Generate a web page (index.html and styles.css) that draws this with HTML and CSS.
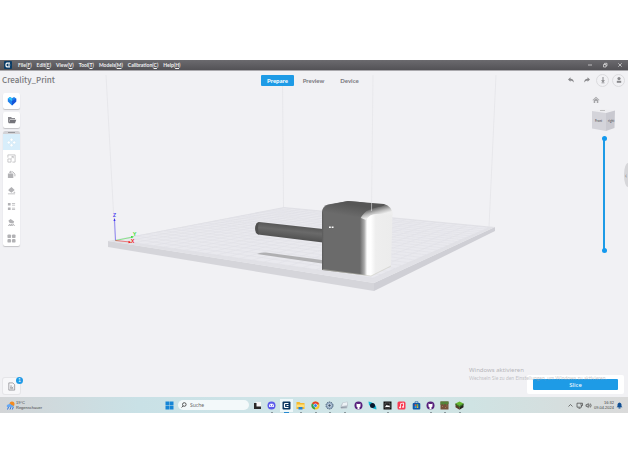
FILE: index.html
```html
<!DOCTYPE html>
<html lang="en">
<head>
<meta charset="utf-8">
<title>Creality_Print</title>
<link rel="stylesheet" href="styles.css">
</head>
<body>
<header class="menubar">
  <svg class="logo" viewBox="0 0 8 8" aria-hidden="true"><rect width="8" height="8" rx="1" fill="#0a3c66"/><path d="M6 2.2H2.8L2 3v2l.8.8H6M4 4h2.2" fill="none" stroke="#fff" stroke-width="1.2"/></svg>
  <nav class="menus">
    <button>File(<u>F</u>)</button>
    <button>Edit(<u>E</u>)</button>
    <button>View(<u>V</u>)</button>
    <button>Tool(<u>T</u>)</button>
    <button>Models(<u>M</u>)</button>
    <button>Calibration(<u>C</u>)</button>
    <button>Help(<u>H</u>)</button>
  </nav>
  <div class="window-buttons">
    <button aria-label="Minimize"><svg viewBox="0 0 6 6"><path d="M1 3h4"/></svg></button>
    <button aria-label="Restore"><svg viewBox="0 0 6 6"><path d="M1.500 2.500h2.500v2.500h-2.500zM2.500 2.500v-1.200h2.500v2.500h-1"/></svg></button>
    <button aria-label="Close"><svg viewBox="0 0 6 6"><path d="M1.300 1.300l3.400 3.400M4.700 1.300l-3.400 3.400"/></svg></button>
  </div>
</header>

<main class="workspace">
  <svg class="scene" viewBox="0 71 628 326" aria-hidden="true">
    <defs>
      <linearGradient id="body" gradientUnits="userSpaceOnUse" x1="321" y1="0" x2="393" y2="0">
        <stop offset="0" stop-color="#505050"/><stop offset=".04" stop-color="#6b6b6b"/><stop offset=".54" stop-color="#6b6b6b"/>
        <stop offset=".6" stop-color="#a9a9a9"/><stop offset=".64" stop-color="#fff"/><stop offset=".69" stop-color="#fff"/>
        <stop offset=".76" stop-color="#eee"/><stop offset="1" stop-color="#ececec"/>
      </linearGradient>
      <linearGradient id="lid" gradientUnits="userSpaceOnUse" x1="350" y1="204" x2="348" y2="216">
        <stop offset="0" stop-color="#565656"/><stop offset="1" stop-color="#6b6b6b"/>
      </linearGradient>
      <linearGradient id="shoulder" gradientUnits="userSpaceOnUse" x1="376" y1="204" x2="379" y2="215">
        <stop offset="0" stop-color="#585858"/><stop offset=".3" stop-color="#686868"/><stop offset=".7" stop-color="#bdbdbd"/><stop offset="1" stop-color="#eee"/>
      </linearGradient>
      <linearGradient id="rod" gradientUnits="userSpaceOnUse" x1="290" y1="225" x2="288.500" y2="239">
        <stop offset="0" stop-color="#565656"/><stop offset=".4" stop-color="#6a6a6a"/><stop offset="1" stop-color="#505050"/>
      </linearGradient>
    </defs>
    <path d="M108 241L374 283V291L108 247Z" fill="#d5d5da"/>
    <path d="M374 283L495 227V231L374 291Z" fill="#cfcfd5"/>
    <path d="M108 241L284 207L495 227L374 283Z" fill="#e1e1e6"/>
    <path d="M116 240L284 208L489 227.500L373 278Z" fill="#e9e9ee"/>
    <path id="bed-grid" fill="none" stroke="#dedee4" stroke-width=".5"/>
    <g stroke="#e5e5e8" stroke-width=".8"><path d="M106 75L115 240M282.500 75L283.500 207M496 75L489 227"/></g>
    <path d="M257 254Q260 252 266 252.500L322 260V263.500Z" fill="#b0b0b2"/>
    <path d="M259 222L323 229V242.500L258 234.500Q255 233 255 228Q256 222 259 222Z" fill="url(#rod)"/>
    <path d="M259 222.500Q255 223 255.500 229Q256 234 259 234.500Q257 228 259 222.500Z" fill="#505050"/>
    <path d="M322 270V213Q322 206 328 204.500L348 201L384 204Q392 206 392.500 213L391 266L371 276Z" fill="url(#body)"/>
    <path d="M361 218Q362 210 368 204L384 204Q392 206 392.500 215L378 214Q370 213 366 220Z" fill="url(#shoulder)"/>
    <path d="M323 214Q323.500 207 328 205L348 201L384 204Q386 206 378 207Q366 209 361 217Z" fill="url(#lid)"/>
    <path d="M322.500 269.500L371 276L391 266" fill="none" stroke="#c4c4b8" stroke-width=".5"/>
    <path d="M373 75L371.500 211" stroke="#e2e2e5" stroke-width=".6"/>
    <path d="M329 226.500h1.800v1.500H329zM331.700 226.500h1.800v1.500h-1.800z" fill="#fff"/>
    <g stroke-width=".6" fill="none"><path d="M115.500 240.500L114.500 219" stroke="#4a3cf0"/><path d="M115.500 240.500L133 237" stroke="#4be04b"/><path d="M115.500 240.500L130 242" stroke="#f03030"/></g>
    <path d="M113.500 221h2l-1-3z" fill="#3c2cf0"/><path d="M131 236l3 .8-2.800 1.300z" fill="#28dc28"/><path d="M128.500 241l3 1.200-3 1z" fill="#f01818"/>
    <g class="axis"><text x="113" y="217" fill="#4a3cf0">Z</text><text x="133" y="236" fill="#28dc28">Y</text><text x="131" y="243" fill="#f01818">X</text></g>
  </svg>

  <div class="topbar">
    <h1>Creality_Print</h1>
    <nav class="tabs">
      <button class="active">Prepare</button>
      <button>Preview</button>
      <button>Device</button>
    </nav>
    <div class="actions">
      <button aria-label="Undo"><svg viewBox="0 0 8 8"><path d="M1 3.500L3.500 1.300V2.700Q6.800 2.800 6.800 6.500Q5.500 4.500 3.500 4.500V5.800Z"/></svg></button>
      <button aria-label="Redo"><svg viewBox="0 0 8 8"><path d="M7 3.500L4.500 1.300V2.700Q1.200 2.800 1.200 6.500Q2.500 4.500 4.500 4.500V5.800Z"/></svg></button>
      <button class="round" aria-label="Download"><svg viewBox="0 0 8 8"><path d="M3.500 1h1v3.300H6L4 6.500 2 4.300h1.500zM2.500 6.600h3v.7h-3z"/></svg></button>
      <button class="round" aria-label="Account"><svg viewBox="0 0 8 8"><circle cx="4" cy="2.600" r="1.600"/><path d="M1.800 4.800h4.400v2H1.800z"/></svg></button>
    </div>
  </div>

  <div class="middle">
    <aside class="tools">
      <button class="card" aria-label="Model library"><svg viewBox="0 0 10 10"><path d="M5 9.500L.8 5.500V2.500L3 1l2 1.200L7 1l2.200 1.500v3Z" fill="#1f83ee"/><path d="M.8 2.500L3 1l2 1.200V5Z" fill="#35c3f5"/><path d="M5 5l4.200-2.500v3L5 9.500Z" fill="#1554d8"/></svg></button>
      <button class="card" aria-label="Open file"><svg viewBox="0 0 10 10"><path d="M1 8V2h3l1 1h3v1.200H3L1.500 8Z" fill="#8a8a8f"/><path d="M3 4.700h6.300L8 8.300H1.700Z" fill="#74747a"/></svg></button>
      <div class="palette">
        <span class="grip"></span>
        <button class="selected" aria-label="Move"><svg viewBox="0 0 10 10" fill="#fff"><path d="M5 0l1.800 2L5 3.800 3.200 2zM5 6.200L6.800 8 5 10 3.200 8zM0 5l2-1.800L3.800 5 2 6.800zM10 5L8 3.200 6.200 5 8 6.800z" stroke="#c4dcea" stroke-width=".2"/></svg></button>
        <button aria-label="Scale"><svg viewBox="0 0 10 10" fill="none" stroke="#b5b5b8" stroke-width=".8"><path d="M1 4V1h8v8H6M1 5.500h3.500V9H1zM4.500 5L7 2.700M5 2.700h2v2"/></svg></button>
        <button aria-label="Rotate"><svg viewBox="0 0 10 10"><path d="M1 4h6v5H1z" fill="#b2b2b5"/><path d="M3 2.500Q7 .5 8.800 4.500V7M4.500 1L2.800 2.500l2 1" fill="none" stroke="#b2b2b5"/></svg></button>
        <button aria-label="Lay flat"><svg viewBox="0 0 10 10" fill="#b2b2b5"><path d="M2 3.500L5 1l3.500 3.500L5 7.500 1.500 5zM1 8.300h8v.8H1zM8 6l1.500 1.500H7z"/></svg></button>
        <button aria-label="Object list"><svg viewBox="0 0 10 10" fill="#b2b2b5"><path d="M1 1h3v3H1zM1 6h3v3H1zM5.500 1.300H9v.8H5.500zM5.500 3H9v.8H5.500zM5.500 6.300H9v.8H5.500zM5.500 8H9v.8H5.500z"/></svg></button>
        <button aria-label="Support"><svg viewBox="0 0 10 10" fill="#b2b2b5"><path d="M1.500 3L4 1l4 3-1 2-4-.5zM1 8.500L3 6.500l1 1 1-1 1 1 1-1 2 2.500H8L7 7.900 6 9H5V8L4 9H3V7.800L2 9z"/></svg></button>
        <button aria-label="Arrange"><svg viewBox="0 0 10 10" fill="#b2b2b5"><rect x=".5" y=".5" width="4" height="4" rx="1.300"/><rect x="5.500" y=".5" width="4" height="4" rx="1.300"/><rect x=".5" y="5.500" width="4" height="4" rx="1.300"/><rect x="5.500" y="5.500" width="4" height="4" rx="1.300"/></svg></button>
      </div>
    </aside>
    <aside class="view">
      <button class="home" aria-label="Home view"><svg viewBox="0 0 8 8"><path d="M.5 4L4 .8 7.500 4l-.5.400L4 1.800 1 4.400zM1.700 4.300L4 2.300l2.300 2V7H4.800V5H3.200v2H1.700z" fill="#a5a5a8"/></svg></button>
      <svg class="cube" viewBox="0 0 24 22" role="img" aria-label="View cube">
        <path d="M0 2L11 0 23 1.500 14 4Z" fill="#eeeef1"/><path d="M0 2l14 2v18L0 19.500Z" fill="#d4d4da"/><path d="M14 4l9-2.500L22.500 19 14 22Z" fill="#c9c9d0"/>
        <path d="M8 1.500h5" stroke="#aaa" stroke-width=".7"/>
        <text x="3" y="13">Front</text><text x="16" y="13">right</text>
      </svg>
      <div class="layers">
        <input type="range" min="0" max="100" value="100" aria-label="Top layer">
        <input type="range" min="0" max="100" value="0" aria-label="Bottom layer">
      </div>
    </aside>
    <button class="drawer" aria-label="Open panel">‹</button>
  </div>

  <div class="bottom">
    <button class="card report" aria-label="Messages"><svg viewBox="0 0 10 10" fill="none" stroke="#77777c" stroke-width=".7"><path d="M2 1h4.500L8.500 3v6H2zM3.500 4.500h2M3.500 6.500l1-1 1 1 1.500-1M3.500 7.500h3.500"/></svg><span class="badge">1</span></button>
    <div class="slice-panel">
      <p class="watermark"><strong>Windows aktivieren</strong>Wechseln Sie zu den Einstellungen, um Windows zu aktivieren.</p>
      <button class="slice">Slice</button>
    </div>
  </div>
</main>

<footer class="taskbar">
  <button class="weather">
    <svg viewBox="0 0 9 9"><circle cx="6" cy="3" r="2.500" fill="#f58a1f"/><path d="M1 6Q0 4 2.300 3.500Q4 1.800 5.500 4Q8 4 7.500 6Z" fill="#67a7f2"/><path d="M2.500 6l-1 2.500M5 6L4 8.500M7.300 6l-1 2.500" stroke="#2c72dc"/></svg>
    <span>19°C<br>Regenschauer</span>
  </button>
  <div class="dock">
    <button aria-label="Start"><svg viewBox="0 0 9 9" fill="#1685d6"><path d="M.5.500h3.800v3.800H.5zM4.700.500h3.800v3.800H4.700zM.5 4.700h3.800v3.800H.5zM4.700 4.700h3.800v3.800H4.700z"/></svg></button>
    <label class="search"><svg viewBox="0 0 6 6" fill="none" stroke="#333" stroke-width=".8"><circle cx="3.300" cy="2.500" r="1.800"/><path d="M2 4L.6 5.500"/></svg><input type="text" placeholder="Suche" aria-label="Suche"></label>
    <div class="apps">
      <button aria-label="Task view"><svg viewBox="0 0 9 9"><path d="M3 1h5v5H3z" fill="#f7f7f7"/><path d="M1 2h2.500v3.500H8V8H1z" fill="#292929"/></svg></button>
      <button class="open" aria-label="Discord"><svg viewBox="0 0 9 9"><circle cx="4.500" cy="4.500" r="4" fill="#5b5bea"/><path d="M2 6Q1.800 3 3.300 2.700h2.400Q7.200 3 7 6L5.500 5.700h-2z" fill="#fff"/><path d="M3 4.300h1M5 4.300h1" stroke="#5b5bea"/></svg></button>
      <button class="open current" aria-label="Creality Print"><svg viewBox="0 0 9 9"><rect x=".5" y=".5" width="8" height="8" rx="1" fill="#09345d"/><path d="M6.500 2.500H3L2.500 3v3l.5.500h3.500M4.500 4.500h2" fill="none" stroke="#fff" stroke-width="1.200"/></svg></button>
      <button class="open" aria-label="Explorer"><svg viewBox="0 0 9 9"><path d="M.5 1h3l1 1h4v6h-8z" fill="#f5b92f"/><path d="M.5 3.500h8V6h-8z" fill="#ffe07a"/><path d="M2.500 6h4v2.500h-4z" fill="#2583d5"/></svg></button>
      <button class="open" aria-label="Chrome"><svg viewBox="0 0 9 9"><circle cx="4.500" cy="4.500" r="4" fill="#f7c52b"/><path d="M4.500 4.500L1 2.500A4 4 0 0 1 8.200 3Z" fill="#e43e30"/><path d="M4.500 4.500L1 2.500A4 4 0 0 0 4 8.500Z" fill="#2fa353"/><circle cx="4.500" cy="4.500" r="2" fill="#fff"/><circle cx="4.500" cy="4.500" r="1.500" fill="#367fea"/></svg></button>
      <button class="open" aria-label="Settings"><svg viewBox="0 0 9 9"><circle cx="4.500" cy="4.500" r="3.500" fill="#8fa8c2" stroke="#4f6478" stroke-dasharray="1.400 .8"/><circle cx="4.500" cy="4.500" r="2" fill="#dce7f0"/><circle cx="4.500" cy="4.500" r="1.200" fill="#3c536c"/></svg></button>
      <button class="open" aria-label="Scanner"><svg viewBox="0 0 9 9"><path d="M2.500 1.500l5-1 .5 4-1 3-6 .5-.5-3z" fill="#c0c8d0"/><path d="M3 2l4-.7v3L2 5z" fill="#edf2f6"/><path d="M.8 6.500l6-.5" stroke="#8d98a4"/></svg></button>
      <button aria-label="GitHub"><svg viewBox="0 0 9 9"><circle cx="4.500" cy="4.500" r="4" fill="#57217c"/><path d="M2.500 2.500l1 .5h2l1-.5v3l-1 .8v2h-2v-2l-1-.8z" fill="#fff"/></svg></button>
      <button aria-label="Orbit"><svg viewBox="0 0 9 9"><path d="M.5.500L4 1.500 8 5l.5 3.500L5 7.500 1 4z" fill="#14b3d2"/><circle cx="4.500" cy="4.500" r="2.500" fill="#07172c"/></svg></button>
      <button class="open" aria-label="Capture"><svg viewBox="0 0 9 9"><path d="M.5.500h8v8h-8z" fill="#111"/><path d="M2 2h5v5H2z" fill="none" stroke="#999" stroke-width=".5"/><path d="M2 6l2-2.500L5 5l1-1 1 2z" fill="#fff"/></svg></button>
      <button aria-label="Music"><svg viewBox="0 0 9 9"><rect x=".5" y=".5" width="8" height="8" rx="1.500" fill="#f83d54"/><path d="M3.500 6.300V2.700l3-.7v3.800" fill="none" stroke="#fff" stroke-width=".8"/><circle cx="3" cy="6.400" r=".9" fill="#fff"/><circle cx="6" cy="5.900" r=".9" fill="#fff"/></svg></button>
      <button aria-label="Store"><svg viewBox="0 0 9 9"><path d="M3 2V.8h3V2" fill="none" stroke="#1a5aa5" stroke-width=".7"/><rect x=".7" y="2" width="7.600" height="6.500" rx="1" fill="#0e58a8"/><path d="M2.700 3.300h1.600v1.600H2.700z" fill="#f25a35"/><path d="M4.700 3.300h1.600v1.600H4.700z" fill="#86c835"/><path d="M2.700 5.300h1.600v1.600H2.700z" fill="#36b6f5"/><path d="M4.700 5.300h1.600v1.600H4.700z" fill="#fac332"/></svg></button>
      <button class="open" aria-label="GitHub Desktop"><svg viewBox="0 0 9 9"><circle cx="4.500" cy="4.500" r="4" fill="#57217c"/><path d="M2.500 2.500l1 .5h2l1-.5v3l-1 .8v2h-2v-2l-1-.8z" fill="#fff"/></svg></button>
      <button class="open" aria-label="Minecraft"><svg viewBox="0 0 9 9"><path d="M.5.500h8v8h-8z" fill="#76513a"/><path d="M.5.500h8V3H7v1H6V3H4v1H3V3H1.500v1h-1z" fill="#548237"/><path d="M2 5h1v1H2zM5 6h1v1H5zM6.500 4.500h1v1h-1z" fill="#a27b58"/></svg></button>
      <button class="open" aria-label="Minecraft Launcher"><svg viewBox="0 0 9 9"><path d="M4.500.5l4 2-4 2.500-4-2.500z" fill="#64b82f"/><path d="M.5 2.500l4 2.500v3.700l-4-2.500z" fill="#593c28"/><path d="M8.500 2.500l-4 2.500v3.700l4-2.500z" fill="#25211c"/><path d="M.5 2.500l4 2.500 4-2.500v1.300L4.500 6.300l-4-2.500z" fill="#367a23"/></svg></button>
    </div>
  </div>
  <div class="tray">
    <button aria-label="Hidden icons"><svg viewBox="0 0 7 7"><path d="M1.500 4.500l2-2 2 2"/></svg></button>
    <button aria-label="Network"><svg viewBox="0 0 7 7"><path d="M5 1.200H1v4h4.500V4M2.500 6.300h2M5 1.200h1.500v2.300H5z"/></svg></button>
    <button aria-label="Volume"><svg viewBox="0 0 7 7"><path d="M1 2.700h1L3.300 1.500v4L2 4.300H1zM4.300 2.500q.8 1 0 2M5.300 1.500q1.700 2 0 4"/></svg></button>
    <time datetime="2024-04-09T16:32">16:32<br>09.04.2024</time>
    <button aria-label="Notifications"><svg viewBox="0 0 7 7"><path class="bell" d="M.5 5.300l1-1V2.500Q1.700.8 3.500.5 5.300.8 5.500 2.500v1.800l1 1zM2.500 5.600h2v.9h-2z"/></svg></button>
  </div>
</footer>
<script src="bed.js"></script>
</body>
</html>
```
FILE: styles.css
```css
* { box-sizing: border-box; }

body {
  margin: 0;
  min-height: 100vh;
  padding: 60px 0 59px;
  display: flex;
  flex-direction: column;
  background: #fff;
  font-family: Lato, "Noto Sans", sans-serif;
  font-size: 5px;
  color: #77777c;
  overflow: hidden;
}

button {
  margin: 0;
  padding: 0;
  border: 0;
  background: none;
  font: inherit;
  color: inherit;
  display: flex;
  align-items: center;
  justify-content: center;
}

svg { display: block; flex: none; }

.menubar {
  display: flex;
  align-items: center;
  height: 11px;
  padding: 0 5px 0 4px;
  background: linear-gradient(#6b6a6e, #535256);
  border-bottom: 1px solid #aaa9ad;
  color: #f0f0f0;
}
.logo { width: 8px; height: 8px; }
.menus { display: flex; gap: 5px; margin-left: 6px; flex: 1; font-weight: 700; line-height: 8px; }
.menus button { display: block; }
.window-buttons { display: flex; gap: 9px; }
.window-buttons svg { width: 6px; height: 6px; fill: none; stroke: #e5e5e5; stroke-width: .7; }

.workspace {
  position: relative;
  flex: 1;
  display: flex;
  flex-direction: column;
  background: #f1f1f4;
}
.scene { position: absolute; inset: 0; width: 100%; height: 100%; }
.axis { font-size: 5px; font-weight: 700; }

.topbar {
  position: relative;
  display: grid;
  grid-template-columns: 1fr auto 1fr;
  align-items: center;
  height: 18px;
  padding: 0 3px 0 2px;
}
.topbar h1 { margin: 0; font-family: "Noto Sans CJK SC", sans-serif; font-size: 8px; line-height: 12px; font-weight: 500; color: #77777a; }
.tabs { display: flex; gap: 3px; }
.tabs button { width: 33px; height: 11px; border-radius: 1px; font-size: 6px; font-weight: 700; }
.tabs .active { background: #1e9be6; color: #fff; }
.actions { display: flex; justify-content: flex-end; align-items: center; gap: 3px; }
.actions button { width: 13px; height: 13px; }
.actions svg { width: 8px; height: 8px; fill: #88888b; }
.actions .round { border: 1px solid #dbdbde; border-radius: 50%; }

.middle {
  position: relative;
  flex: 1;
  display: flex;
  justify-content: space-between;
  align-items: flex-start;
  padding: 4px 12px 0 3px;
}
.tools { display: flex; flex-direction: column; gap: 3px; width: 17px; }
.card {
  width: 17px;
  height: 16px;
  background: #fff;
  border-radius: 2px;
  box-shadow: 0 1px 1px #c2c2c6;
}
.card svg { width: 10px; height: 10px; }
.palette { background: #fff; border-radius: 2px; overflow: hidden; box-shadow: 0 1px 1px #c2c2c6; }
.grip { display: flex; align-items: center; justify-content: center; height: 3px; background: #d2d2d6; }
.grip::before { content: ""; width: 7px; height: 1px; background: #98989c; }
.palette button { width: 100%; height: 16px; }
.palette svg { width: 9px; height: 9px; }
.palette .selected { background: #d8eefb; }

.view { display: flex; flex-direction: column; align-items: center; width: 24px; padding-top: 3px; }
.home { align-self: flex-start; width: 8px; height: 8px; }
.home svg { width: 8px; height: 8px; }
.cube { width: 24px; height: 22px; margin-top: 5px; font-size: 3px; font-weight: 700; fill: #69696e; }
.layers { position: relative; width: 6px; height: 117px; margin-top: 5px; }
.layers::before { content: ""; position: absolute; inset: 2px; background: #1e9be6; }
.layers input {
  position: absolute;
  inset: 0;
  margin: 0;
  width: 6px;
  height: 100%;
  appearance: none;
  writing-mode: vertical-lr;
  direction: rtl;
  background: none;
  pointer-events: none;
}
.layers input::-webkit-slider-thumb {
  appearance: none;
  width: 5px;
  height: 5px;
  border-radius: 50%;
  background: #1499ee;
  pointer-events: auto;
}
.drawer {
  position: absolute;
  right: 0;
  top: 74px;
  width: 4px;
  height: 24px;
  border-radius: 100% 0 0 100% / 50% 0 0 50%;
  background: #d6d6d9;
  color: #77777c;
  font-size: 7px;
}

.bottom {
  position: relative;
  display: flex;
  justify-content: space-between;
  align-items: flex-end;
  padding: 0 4px 3px 3px;
}
.report { position: relative; background: #f7f7f9; box-shadow: 0 0 0 1px #e5e5e8; }
.report svg { width: 9px; height: 9px; }
.badge {
  position: absolute;
  right: -3px;
  top: -1px;
  width: 7px;
  height: 7px;
  border-radius: 50%;
  background: #1e9be6;
  color: #fff;
  font-size: 5px;
  line-height: 7px;
}
.slice-panel { position: relative; width: 97px; padding: 4px 6px; background: #fff; border-radius: 2px; }
.slice { width: 100%; height: 11px; border-radius: 1px; background: #1e9be6; color: #fff; font-family: "Noto Sans", sans-serif; font-size: 6px; }
.watermark {
  position: absolute;
  left: -58px;
  top: -10px;
  margin: 0;
  white-space: nowrap;
  font-size: 5px;
  line-height: 6px;
  color: rgb(160 160 164 / .6);
  pointer-events: none;
}
.watermark strong { display: block; font-family: "Noto Sans", sans-serif; font-size: 6px; line-height: 10px; font-weight: 400; color: #b6b6ba; }

.taskbar {
  display: grid;
  grid-template-columns: 1fr auto 1fr;
  align-items: center;
  height: 16px;
  padding: 0 5px 0 6px;
  background: linear-gradient(90deg, #d3d5d7, #c9e1e6 22%, #d2e6e8 60%, #cfe3e3 75%, #dadada);
  color: #444;
  font-family: "Liberation Sans", sans-serif;
  font-size: 4px;
  line-height: 5px;
}
.weather { justify-content: flex-start; gap: 1px; text-align: left; }
.weather svg { width: 9px; height: 9px; }
.dock { display: flex; align-items: center; gap: 4px; }
.dock svg { width: 9px; height: 9px; }
.search {
  display: flex;
  align-items: center;
  gap: 3px;
  width: 71px;
  height: 10px;
  padding: 0 3px;
  border-radius: 5px;
  background: #f3f9fa;
}
.search svg { width: 6px; height: 6px; }
.search input { flex: 1; min-width: 0; height: 8px; padding: 0; border: 0; outline: 0; background: none; font-family: "Noto Sans", sans-serif; font-size: 5px; }
.search input::placeholder { color: #666; }
.apps { display: flex; justify-content: space-between; width: 211px; }
.apps button { position: relative; width: 9px; }
.apps .current { background: #eef7f9; box-shadow: 0 0 0 2px #eef7f9; }
.open::after { content: ""; position: absolute; left: 4px; bottom: -3px; width: 2px; height: 1px; background: #89979c; }
.open.current::after { left: 2px; width: 5px; background: #2689d0; }
.tray { display: flex; justify-content: flex-end; align-items: center; gap: 2px; text-align: right; }
.tray svg { width: 7px; height: 7px; fill: none; stroke: #444; stroke-width: .7; }
.tray .bell { fill: #114f93; stroke: none; }
```
FILE: bed.js
```js
// Projects the square print bed onto its four corners and rules it.
const [a, b, c, d] = [[116, 240], [373, 278], [489, 227.5], [284, 208]];
const dx1 = b[0] - c[0], dx2 = d[0] - c[0], sx = a[0] - b[0] + c[0] - d[0];
const dy1 = b[1] - c[1], dy2 = d[1] - c[1], sy = a[1] - b[1] + c[1] - d[1];
const det = dx1 * dy2 - dx2 * dy1;
const g = (sx * dy2 - dx2 * sy) / det;
const h = (dx1 * sy - sx * dy1) / det;
function project(u, v) {
  const w = g * u + h * v + 1;
  return [0, 1].map(i =>
    ((b[i] - a[i] + g * b[i]) * u + (d[i] - a[i] + h * d[i]) * v + a[i]) / w);
}
const cells = 22;
let path = "";
for (let i = 0; i <= cells; i++) {
  const t = i / cells;
  path += `M${project(t, 0)}L${project(t, 1)}M${project(0, t)}L${project(1, t)}`;
}
document.getElementById("bed-grid").setAttribute("d", path);
```
